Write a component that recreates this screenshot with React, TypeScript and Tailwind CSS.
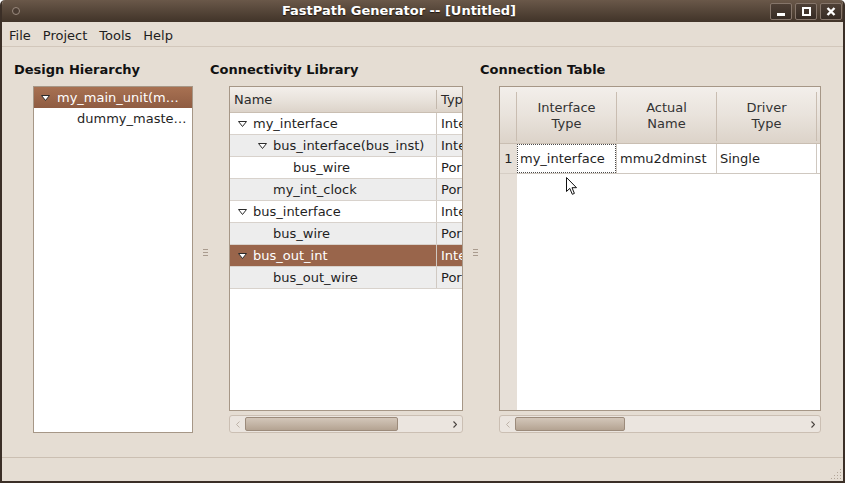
import React from "react";

type Node = { name: string; type: string; level: number; open?: boolean; selected?: boolean };

const libraryRows: Node[] = [
  { name: "my_interface", type: "Interface", level: 0, open: true },
  { name: "bus_interface(bus_inst)", type: "Interface", level: 1, open: true },
  { name: "bus_wire", type: "Port", level: 2 },
  { name: "my_int_clock", type: "Port", level: 1 },
  { name: "bus_interface", type: "Interface", level: 0, open: true },
  { name: "bus_wire", type: "Port", level: 1 },
  { name: "bus_out_int", type: "Interface", level: 0, open: true, selected: true },
  { name: "bus_out_wire", type: "Port", level: 1 },
];

const font = "font-['DejaVu_Sans','Liberation_Sans',sans-serif]";

function Expander() {
  return (
    <svg width="9" height="6" viewBox="0 0 9 6" className="shrink-0">
      <path d="M0.5 0.5 L8.5 0.5 L4.5 5.5 Z" fill="#fff" stroke="#2b2b2b" strokeWidth="1" strokeLinejoin="round" />
    </svg>
  );
}

function Grip() {
  return (
    <div className="flex flex-col gap-[2px]">
      <div className="h-px w-[5px] bg-[#a99b8e]" />
      <div className="h-px w-[5px] bg-[#a99b8e]" />
      <div className="h-px w-[5px] bg-[#a99b8e]" />
    </div>
  );
}

function HScroll({ thumb }: { thumb: string }) {
  return (
    <div className="mt-[4px] flex h-[18px] items-center rounded-[3px] border border-[#cbbfb3] bg-[#ebe5df]">
      <div className="flex w-[15px] justify-center">
        <svg width="4" height="7" viewBox="0 0 4 7">
          <path d="M3.5 0.5 L0.5 3.5 L3.5 6.5" fill="none" stroke="#bdb2a7" strokeWidth="1" />
        </svg>
      </div>
      <div className={`${thumb} h-[14px] rounded-[2px] border border-[#9c8b7b] bg-linear-to-b from-[#d3c6b9] via-[#c4b5a6] to-[#b4a392]`} />
      <div className="flex-1" />
      <div className="flex w-[15px] justify-center">
        <svg width="4" height="7" viewBox="0 0 4 7">
          <path d="M0.5 0.5 L3.5 3.5 L0.5 6.5" fill="none" stroke="#4a4440" strokeWidth="1.2" />
        </svg>
      </div>
    </div>
  );
}

function TitleButton({ children }: { children: React.ReactNode }) {
  return (
    <div className="flex h-[17px] w-[22px] items-center justify-center rounded-[2px] border border-[#85756a] bg-linear-to-b from-[#4d3f35] to-[#372c25]">
      {children}
    </div>
  );
}

export default function App() {
  return (
    <div className={`h-[483px] w-[846px] bg-white ${font}`}>
      <div className="flex h-[483px] w-[845px] flex-col overflow-hidden rounded-t-[5px] border-x-2 border-b-2 border-[#3b2f27] bg-[#e5ddd3]">
        {/* title bar */}
        <div className="flex h-[22px] shrink-0 items-center bg-linear-to-b from-[#6a5849] to-[#413429]">
          <div className="flex w-[26px] justify-center pl-[2px]">
            <div className="h-[8px] w-[8px] rounded-full border border-[#9a8a7e] bg-[#4a3c32]" />
          </div>
          <div className="flex-1 text-center text-[13px] font-bold text-white [text-shadow:0_1px_1px_#1e1610]">
            FastPath Generator -- [Untitled]
          </div>
          <div className="flex gap-[3px] pr-[1px]">
            <TitleButton>
              <div className="mt-[6px] h-[3px] w-[8px] bg-white" />
            </TitleButton>
            <TitleButton>
              <div className="h-[9px] w-[9px] border-2 border-white" />
            </TitleButton>
            <TitleButton>
              <svg width="10" height="9" viewBox="0 0 10 9">
                <path d="M1.5 1 L8.5 8 M8.5 1 L1.5 8" stroke="#fff" strokeWidth="2.4" />
              </svg>
            </TitleButton>
          </div>
        </div>

        {/* menu bar */}
        <div className="flex h-[25px] shrink-0 items-center border-b border-[#d2c7bb] pt-[3px] pl-[1px] text-[13px] text-[#1e1e1e]">
          <span className="px-[6px]">File</span>
          <span className="px-[6px]">Project</span>
          <span className="px-[6px]">Tools</span>
          <span className="px-[6px]">Help</span>
        </div>

        {/* content */}
        <div className="relative flex h-[410px] shrink-0 pl-[12px] text-[13px] text-[#1f1f1f]">
          {/* design hierarchy */}
          <div className="flex w-[186px] shrink-0 flex-col pt-[15px]">
            <div className="h-[16px] leading-[16px] font-bold text-[#111]">Design Hierarchy</div>
            <div className="mt-[8px] ml-[19px] h-[347px] w-[160px] border border-[#a69787] bg-white">
              <div className="flex h-[21px] items-center bg-linear-to-b from-[#a87152] to-[#8f5c42] pt-px pl-[7px] text-white">
                <div className="flex w-[16px]">
                  <Expander />
                </div>
                <span>my_main_unit(m…</span>
              </div>
              <div className="flex h-[21px] items-center pt-px pl-[43px]">dummy_maste…</div>
            </div>
          </div>

          <div className="flex w-[10px] shrink-0 items-center justify-center">
            <Grip />
          </div>

          {/* connectivity library */}
          <div className="flex w-[260px] shrink-0 flex-col pt-[15px]">
            <div className="h-[16px] leading-[16px] font-bold text-[#111]">Connectivity Library</div>
            <div className="mt-[8px] ml-[19px] w-[234px]">
              <div className="h-[325px] overflow-hidden border border-[#a69787] bg-white">
                <div className="flex h-[26px] items-center border-b border-[#c9beb2] bg-linear-to-b from-[#f3efeb] via-[#e9e3dc] to-[#dcd3c9] text-[#2a2a2a]">
                  <div className="w-[206px] shrink-0 pl-[4px]">Name</div>
                  <div className="h-[19px] w-px shrink-0 bg-[#c3b8ac]" />
                  <div className="pl-[4px] whitespace-nowrap">Type</div>
                </div>
                {libraryRows.map((r, i) => (
                  <div
                    key={i}
                    className={`flex h-[22px] border-b ${
                      r.selected
                        ? "border-[#d8d2cc] bg-[#99654b] text-white"
                        : i % 2 === 1
                        ? "border-[#d8d2cc] bg-[#ededed]"
                        : "border-[#d8d2cc] bg-white"
                    }`}
                  >
                    <div className="flex w-[207px] shrink-0 items-center border-r border-[#d0c9c2] pt-px">
                      <div className="flex items-center pl-[6px]">
                        {r.level > 0 && <div className={r.level === 1 ? "w-[20px]" : "w-[40px]"} />}
                        <div className="flex w-[17px] pl-[2px]">{r.open && <Expander />}</div>
                        <span className="whitespace-nowrap">{r.name}</span>
                      </div>
                    </div>
                    <div className="flex items-center pt-px pl-[4px] whitespace-nowrap">{r.type}</div>
                  </div>
                ))}
              </div>
              <HScroll thumb="w-[153px]" />
            </div>
          </div>

          <div className="flex w-[10px] shrink-0 items-center justify-center">
            <Grip />
          </div>

          {/* connection table */}
          <div className="flex flex-1 flex-col pt-[15px]">
            <div className="h-[16px] leading-[16px] font-bold text-[#111]">Connection Table</div>
            <div className="mt-[8px] ml-[19px] w-[322px]">
              <div className="flex h-[325px] flex-col overflow-hidden border border-[#a69787] bg-white">
                <div className="flex h-[57px] shrink-0 items-center border-b border-[#c9beb2] bg-linear-to-b from-[#f3efeb] via-[#e9e3dc] to-[#dcd3c9] pt-[2px] text-center leading-[16px] text-[#333]">
                  <div className="w-[16px]" />
                  <div className="h-[49px] w-px bg-[#c9bdb1]" />
                  <div className="w-[99px]">
                    Interface
                    <br />
                    Type
                  </div>
                  <div className="h-[49px] w-px bg-[#c9bdb1]" />
                  <div className="w-[99px]">
                    Actual
                    <br />
                    Name
                  </div>
                  <div className="h-[49px] w-px bg-[#c9bdb1]" />
                  <div className="w-[99px]">
                    Driver
                    <br />
                    Type
                  </div>
                  <div className="h-[49px] w-px bg-[#c9bdb1]" />
                </div>
                <div className="flex flex-1">
                  <div className="w-[17px] bg-[#e6dfd7]">
                    <div className="flex h-[30px] items-center justify-center border-b border-[#d6cec5] text-[#222]">1</div>
                  </div>
                  <div className="flex-1">
                    <div className="flex h-[30px] border-b border-[#cfc8c0]">
                      <div className="w-[100px] border-r border-[#cfc8c0]">
                        <div className="flex h-full items-center border border-dotted border-[#4a4a4a] pl-[2px]">my_interface</div>
                      </div>
                      <div className="flex w-[100px] items-center border-r border-[#cfc8c0] pl-[3px]">mmu2dminst</div>
                      <div className="flex w-[100px] items-center border-r border-[#cfc8c0] pl-[3px]">Single</div>
                    </div>
                  </div>
                </div>
              </div>
              <HScroll thumb="w-[110px]" />
            </div>
          </div>

          {/* mouse pointer */}
          <svg className="absolute top-[129px] left-[563px]" width="13" height="20" viewBox="0 0 13 20">
            <path
              d="M1.5 1.5 L1.5 15.5 L4.8 12.4 L7.3 18.3 L9.4 17.4 L7 11.7 L11.5 11.7 Z"
              fill="#fff"
              stroke="#111"
              strokeWidth="1"
              strokeLinejoin="round"
            />
          </svg>
        </div>

        {/* status bar */}
        <div className="flex flex-1 items-end justify-end border-t border-[#cbbfb2]">
          <svg width="12" height="13" viewBox="0 0 12 13" className="mr-[1px] mb-[1px]">
            {[
              [9, 2],
              [6, 5],
              [9, 5],
              [3, 8],
              [6, 8],
              [9, 8],
              [0, 11],
              [3, 11],
              [6, 11],
              [9, 11],
            ].map(([x, y], i) => (
              <rect key={i} x={x + 1} y={y} width="1" height="1" fill="#b3a698" />
            ))}
          </svg>
        </div>
      </div>
    </div>
  );
}
